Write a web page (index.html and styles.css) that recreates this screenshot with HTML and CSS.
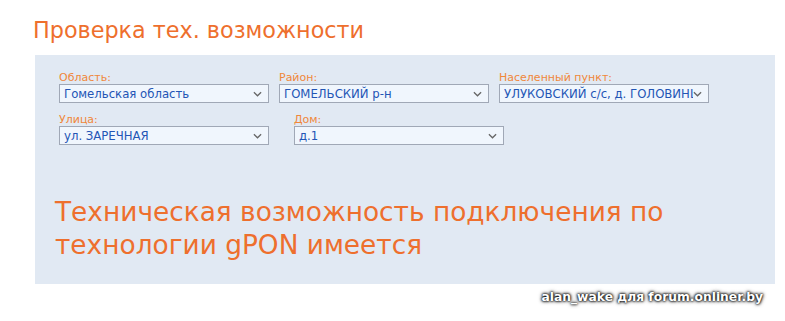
FILE: index.html
```html
<!DOCTYPE html>
<html lang="ru">
<head>
  <meta charset="UTF-8">
  <title>Проверка тех. возможности</title>
  <link rel="stylesheet" href="styles.css">
</head>
<body>
  <h1 class="pageTitle">Проверка тех. возможности</h1>

  <!-- Check form -->
  <div class="checkPanel">
    <div class="fieldRow">
      <div class="field">
        <label>Область:</label>
        <div class="selectBox"><span>Гомельская область</span><svg viewBox="0 0 10 6"><path d="M1 1l4 4 4-4"/></svg></div>
      </div>
      <div class="field">
        <label>Район:</label>
        <div class="selectBox"><span>ГОМЕЛЬСКИЙ р-н</span><svg viewBox="0 0 10 6"><path d="M1 1l4 4 4-4"/></svg></div>
      </div>
      <div class="field">
        <label>Населенный пункт:</label>
        <div class="selectBox"><span>УЛУКОВСКИЙ с/с, д. ГОЛОВИНЦЫ</span><svg viewBox="0 0 10 6"><path d="M1 1l4 4 4-4"/></svg></div>
      </div>
    </div>
    <div class="fieldRow wide">
      <div class="field">
        <label>Улица:</label>
        <div class="selectBox"><span>ул. ЗАРЕЧНАЯ</span><svg viewBox="0 0 10 6"><path d="M1 1l4 4 4-4"/></svg></div>
      </div>
      <div class="field">
        <label>Дом:</label>
        <div class="selectBox"><span>д.1</span><svg viewBox="0 0 10 6"><path d="M1 1l4 4 4-4"/></svg></div>
      </div>
    </div>
    <p class="result">Техническая возможность подключения по технологии gPON имеется</p>
  </div>

  <div class="watermark">alan_wake для forum.onliner.by</div>
</body>
</html>
```

FILE: styles.css
```css
/* Base */
body {
  margin: 0;
  padding: 0;
  background: #fff;
  font-family: "DejaVu Sans", Verdana, sans-serif;
  width: 785px;
  height: 321px;
  overflow: hidden;
}
.pageTitle {
  margin: 0;
  padding: 17px 0 0 33px;
  height: 55px;
  box-sizing: border-box;
  font-size: 22.3px;
  font-weight: normal;
  line-height: 26px;
  color: #ee6f2d;
}
/* Panel */
.checkPanel {
  margin-left: 35px;
  width: 740px;
  height: 229px;
  background: #e1e9f3;
  padding: 16px 0 0 24px;
  box-sizing: border-box;
}
.fieldRow {
  display: flex;
  gap: 10px;
  margin-bottom: 10px;
}
.fieldRow.wide {
  gap: 25px;
}
.field {
  display: flex;
  flex-direction: column;
  width: 210px;
}
.field label {
  font-size: 11px;
  line-height: 13px;
  color: #f0873a;
}
.selectBox {
  display: flex;
  align-items: center;
  height: 19px;
  box-sizing: border-box;
  border: 1px solid #a0a8b6;
  background: #f0f6fd;
  padding: 0 6px 0 4px;
  font-family: "DejaVu Sans Condensed", Tahoma, sans-serif;
  font-size: 13px;
  color: #2355b5;
  overflow: hidden;
}
.selectBox span {
  flex: 1;
  white-space: nowrap;
  overflow: hidden;
}
.selectBox svg {
  width: 9px;
  height: 6px;
  flex: none;
  fill: none;
  stroke: #666;
  stroke-width: 1.4;
}
/* Result */
.result {
  margin: 50px 0 0 -4px;
  font-size: 26.4px;
  line-height: 33px;
  color: #ee6f2d;
  width: 640px;
}
/* Watermark */
.watermark {
  text-align: right;
  padding: 6px 22px 0 0;
  font-size: 12.3px;
  font-weight: bold;
  color: #fff;
  text-shadow: 0 0 2px #000, 0 0 3px #000, 0 0 4px #333;
}
```
